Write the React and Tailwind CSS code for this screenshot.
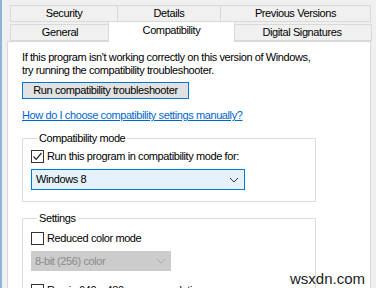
import React from 'react';

const FONT = { fontFamily: '"Liberation Sans", Arial, sans-serif' };

const Check = ({ checked }) => (
  <span className="flex h-[13px] w-[13px] shrink-0 items-center justify-center border border-[#333333] bg-white">
    {checked && (
      <svg width="11" height="11" viewBox="0 0 11 11">
        <polyline points="1.5,5.5 4.2,8.3 9.5,2" fill="none" stroke="#222" strokeWidth="1.2" />
      </svg>
    )}
  </span>
);

const Chevron = ({ color }) => (
  <svg width="10" height="6" viewBox="0 0 10 6">
    <polyline points="1,1 5,5 9,1" fill="none" stroke={color} strokeWidth="1" />
  </svg>
);

const Tab = ({ label, w, selected }) => (
  <div
    className={
      selected
        ? 'relative z-10 -mb-px -mx-[2px] flex h-[21px] items-start justify-center border border-b-0 border-[#d9d9d9] bg-white pt-[2px]'
        : 'flex h-[17px] items-center justify-center border border-[#d9d9d9] bg-[#f0f0f0] -ml-px first:ml-0'
    }
    style={{ width: w }}
  >
    {label}
  </div>
);

export default function App() {
  return (
    <div
      className="relative h-[288px] w-[376px] overflow-hidden border-l-2 border-[#8fb3dc] bg-[#f0f0f0] text-[11px] leading-[13px] tracking-[-0.4px] text-black"
      style={FONT}
    >
      <div className="ml-[8px] mt-[5px] flex">
        <Tab label="Security" w={108} />
        <Tab label="Details" w={104} />
        <Tab label="Previous Versions" w={151} />
      </div>
      <div className="ml-[8px] -mt-px flex items-end">
        <Tab label="General" w={100} />
        <Tab label="Compatibility" w={127} selected />
        <Tab label="Digital Signatures" w={140} />
      </div>

      <div className="ml-[5px] h-[260px] w-[364px] border border-[#d9d9d9] bg-white pl-[14px] pt-[9px]">
        <p>If this program isn't working correctly on this version of Windows,</p>
        <p>try running the compatibility troubleshooter.</p>

        <button className="mt-[5px] flex h-[17px] w-[167px] items-center justify-center border border-[#0078d7] bg-[#e1e1e1]">
          Run compatibility troubleshooter
        </button>

        <p className="mt-[10px] text-[#0066cc] underline">
          How do I choose compatibility settings manually?
        </p>

        <fieldset className="mt-[10px] w-[294px] border border-[#dcdcdc] pb-[11px] pl-[8px]">
          <legend className="ml-[6px] px-[2px]">Compatibility mode</legend>
          <div className="mt-[5px] flex h-[13px] items-center gap-[3px]">
            <Check checked />
            <span>Run this program in compatibility mode for:</span>
          </div>
          <div className="mt-[6px] flex h-[21px] w-[214px] items-center justify-between border border-[#0078d7] bg-[#e5f1fb] pl-[4px] pr-[5px]">
            <span>Windows 8</span>
            <Chevron color="#333" />
          </div>
        </fieldset>

        <fieldset className="mt-[10px] h-[120px] w-[294px] border border-[#dcdcdc] pl-[8px]">
          <legend className="ml-[6px] px-[2px]">Settings</legend>
          <div className="mt-[7px] flex h-[13px] items-center gap-[3px]">
            <Check />
            <span>Reduced color mode</span>
          </div>
          <div className="mt-[6px] flex h-[20px] w-[140px] items-center justify-between bg-[#cccccc] pl-[4px] pr-[5px] text-[#8a8a8a]">
            <span>8-bit (256) color</span>
            <Chevron color="#a8a8a8" />
          </div>
          <div className="mt-[13px] flex h-[13px] items-center gap-[3px]">
            <Check />
            <span>Run in 640 x 480 screen resolution</span>
          </div>
        </fieldset>
      </div>

      <div className="absolute right-[11px] top-[271px] text-[15px] leading-[16px] tracking-normal text-[#222]">
        wsxdn.com
      </div>
    </div>
  );
}
